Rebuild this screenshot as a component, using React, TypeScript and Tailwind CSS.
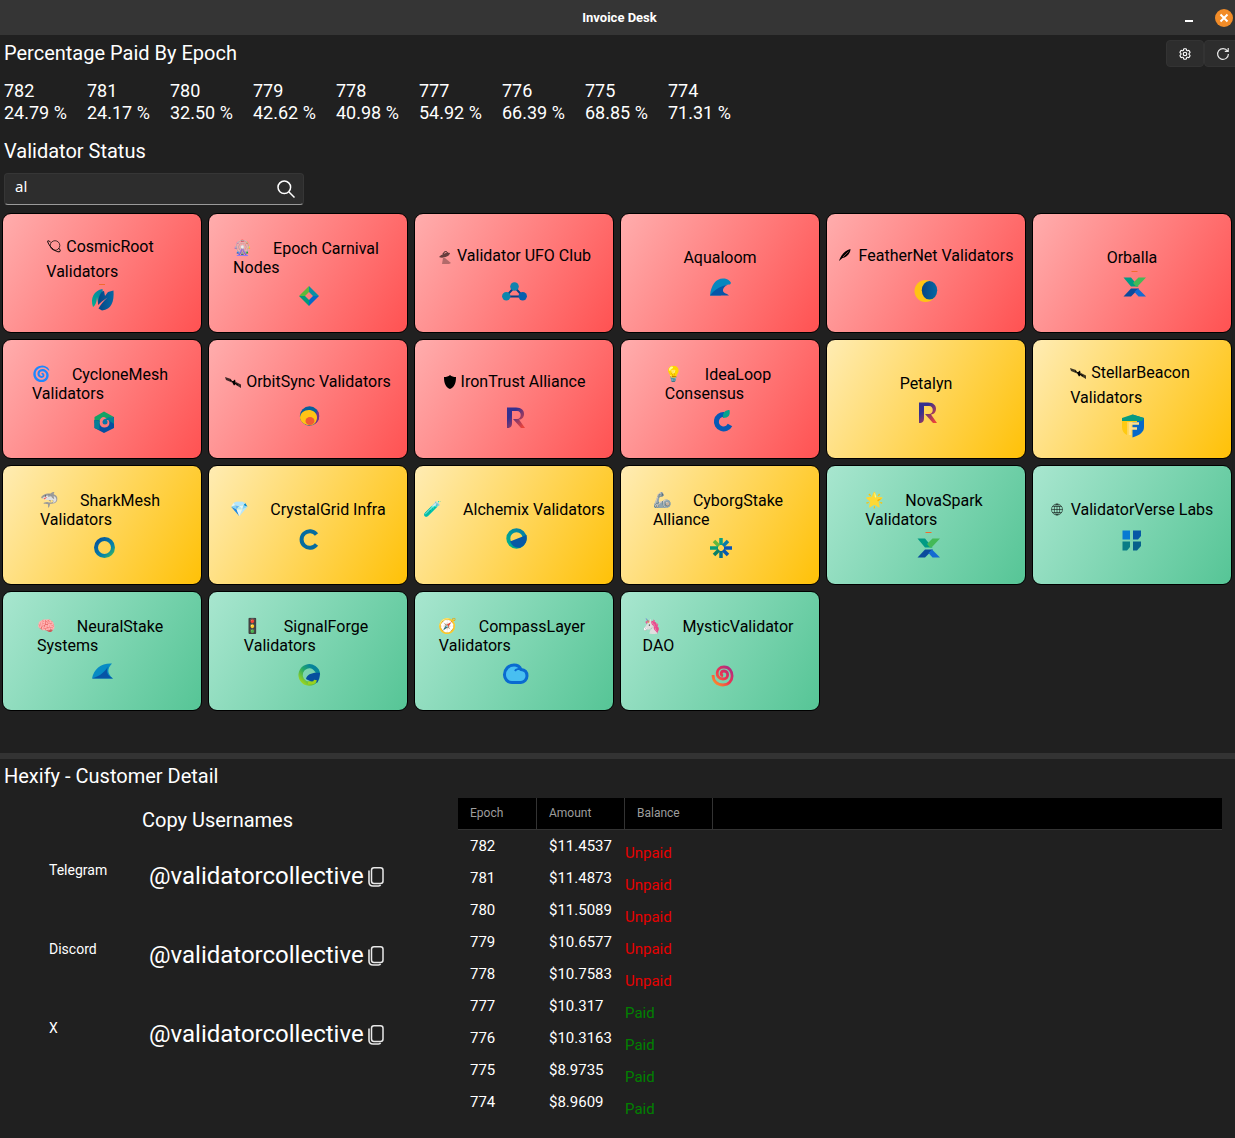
import React from "react";
import { HiOutlineCog6Tooth } from "react-icons/hi2";

type Tone = "red" | "yellow" | "green";
type Glyph = "planet" | "ufo" | "feather" | "satellite" | "shield";

interface Validator {
  lines: string[];
  emoji?: string;
  glyph?: Glyph;
  globe?: boolean;
  logo: string;
  tone: Tone;
}

const TONES: Record<Tone, string> = {
  red: "bg-[linear-gradient(121deg,#ffadad,#ff5252)]",
  yellow: "bg-[linear-gradient(121deg,#ffecb3,#ffc107)]",
  green: "bg-[linear-gradient(121deg,#a8e6cf,#56c596)]",
};

const EPOCHS = [
  ["782", "24.79 %"],
  ["781", "24.17 %"],
  ["780", "32.50 %"],
  ["779", "42.62 %"],
  ["778", "40.98 %"],
  ["777", "54.92 %"],
  ["776", "66.39 %"],
  ["775", "68.85 %"],
  ["774", "71.31 %"],
];

const VALIDATORS: Validator[] = [
  { lines: ["CosmicRoot", "Validators"], glyph: "planet", logo: "leaf", tone: "red" },
  { lines: ["Epoch Carnival", "Nodes"], emoji: "🎡", logo: "diamond", tone: "red" },
  { lines: ["Validator UFO Club"], glyph: "ufo", logo: "nodes", tone: "red" },
  { lines: ["Aqualoom"], logo: "wave", tone: "red" },
  { lines: ["FeatherNet Validators"], glyph: "feather", logo: "moon", tone: "red" },
  { lines: ["Orballa"], logo: "cross", tone: "red" },
  { lines: ["CycloneMesh", "Validators"], emoji: "🌀", logo: "hex", tone: "red" },
  { lines: ["OrbitSync Validators"], glyph: "satellite", logo: "arcs", tone: "red" },
  { lines: ["IronTrust Alliance"], glyph: "shield", logo: "ribbon", tone: "red" },
  { lines: ["IdeaLoop", "Consensus"], emoji: "💡", logo: "loop", tone: "red" },
  { lines: ["Petalyn"], logo: "ribbon", tone: "yellow" },
  { lines: ["StellarBeacon", "Validators"], glyph: "satellite", logo: "crest", tone: "yellow" },
  { lines: ["SharkMesh", "Validators"], emoji: "🦈", logo: "ring", tone: "yellow" },
  { lines: ["CrystalGrid Infra"], emoji: "💎", logo: "arc", tone: "yellow" },
  { lines: ["Alchemix Validators"], emoji: "🧪", logo: "disc", tone: "yellow" },
  { lines: ["CyborgStake", "Alliance"], emoji: "🦾", logo: "burst", tone: "yellow" },
  { lines: ["NovaSpark", "Validators"], emoji: "🌟", logo: "cross", tone: "green" },
  { lines: ["ValidatorVerse Labs"], globe: true, logo: "quad", tone: "green" },
  { lines: ["NeuralStake", "Systems"], emoji: "🧠", logo: "fin", tone: "green" },
  { lines: ["SignalForge", "Validators"], emoji: "🚦", logo: "swoosh", tone: "green" },
  { lines: ["CompassLayer", "Validators"], emoji: "🧭", logo: "cloud", tone: "green" },
  { lines: ["MysticValidator", "DAO"], emoji: "🦄", logo: "spiral", tone: "green" },
];

const ACCOUNTS = ["Telegram", "Discord", "X"];

const INVOICES = [
  ["782", "$11.4537", "Unpaid"],
  ["781", "$11.4873", "Unpaid"],
  ["780", "$11.5089", "Unpaid"],
  ["779", "$10.6577", "Unpaid"],
  ["778", "$10.7583", "Unpaid"],
  ["777", "$10.317", "Paid"],
  ["776", "$10.3163", "Paid"],
  ["775", "$8.9735", "Paid"],
  ["774", "$8.9609", "Paid"],
];

/* Logo artwork, drawn on a 32 x 32 field */
const LOGOS: Record<string, React.ReactNode> = {
  leaf: (
    <>
      <path d="M13 4.500h6" stroke="#f26a2e" strokeWidth="1" />
      <path d="M7 27C4 18 8 10.500 16.500 9c.6 5-.3 9-4.500 14l-1-6c-.3 4-1 8-4 10z" fill="url(#g-teal)" />
      <path d="M12 25c0-8 3-14 6-14l1 5 3-4 5.500-1.500c.8 11-2 19-11.500 20l-3.500-2c2-4 5-7 9-11-4 2.500-7 5-9.500 7.500z" fill="url(#g-navy)" />
    </>
  ),
  diamond: (
    <>
      <path d="M17 10 7 20h6l4-4z" fill="#5cb83c" />
      <path d="m7 20 10 10v-6l-4-4z" fill="#009a7b" />
      <path d="m17 10 10 10h-6l-4-4z" fill="#0b8fa3" />
      <path d="M17 30l10-10h-6l-4 4z" fill="#0668c8" />
    </>
  ),
  nodes: (
    <>
      <path d="M16.500 15 8 24.500h17z" fill="none" stroke="#063f86" strokeWidth="2" />
      <circle cx="16.500" cy="14.500" r="4.300" fill="#1183ae" />
      <circle cx="8.300" cy="24.300" r="4.200" fill="#0a86ad" />
      <circle cx="24.700" cy="24.300" r="4.200" fill="#075fae" />
    </>
  ),
  wave: (
    <>
      <path d="M6 28.500C7 18 12 11.500 19 11.500c4 0 7 2 8 4.500l-1 1.500c-7-1-10 7-9 11z" fill="#0687bf" />
      <path d="M6 28.500c4-5 8-8 13-9.500 2-.7 4-1 5-1.500-6 3-7 8-1 9.500l2 1.500z" fill="#0656a8" />
    </>
  ),
  moon: (
    <>
      <circle cx="15.500" cy="19" r="11" fill="#ffc414" />
      <ellipse cx="19.500" cy="18.300" rx="7.700" ry="9.300" fill="url(#g-navy)" />
    </>
  ),
  cross: (
    <>
      <path d="M15.500 4.500h6" stroke="#f26a2e" strokeWidth="1" />
      <path d="M7.500 10.500H15l7.500 9H15z" fill="#009b84" />
      <path d="M30 10.500h-7.500L17 16l3 3.500h1.500z" fill="#44b957" />
      <path d="M7.500 29.500H15l8-8h-8z" fill="#0b4a9c" />
      <path d="M30 29.500h-7.500l-4-4.500 3.500-3.500z" fill="#146bd2" />
    </>
  ),
  hex: (
    <>
      <path d="M18 9.500 8.500 15v6l5-1c0-3 2-5 4.500-5l4 2 6-2z" fill="#13a366" />
      <path d="M8.500 18v8l9.500 5 10-5V15l-6 2c3 4 1 9-4 8.500-3 0-5-3-4.500-7z" fill="#064fa0" />
      <path d="M8.500 18v8l5 2v-9zM17 18h5l6 4v-6l-5-1z" fill="#077f96" />
      <circle cx="19" cy="20" r="2.500" fill="#0875aa" />
    </>
  ),
  arcs: (
    <>
      <circle cx="17.500" cy="18" r="9.700" fill="#075f9b" />
      <path d="M25 12c4 5 2 12-3 14.500z" fill="#74308c" />
      <path d="M8 20c0-10 16-11 17-1 0 4-2 7-5 8-6 1-11-2-12-7z" fill="#ffc315" />
      <ellipse cx="18" cy="23" rx="4.500" ry="4" fill="#f05a35" />
    </>
  ),
  ribbon: (
    <path d="M9 30V9.500h9c11 0 9.500 12 3 12l6 8.500h-4l-8-9h4c5 0 5-8 0-8h-5v12c0 3-1 5-5 5z" fill="url(#g-ribbon)" />
  ),
  loop: (
    <>
      <path d="M20 12.500a7.200 7.200 0 1 0 6 10.500" fill="none" stroke="#0659b5" strokeWidth="5" />
      <path d="M19 14c0-4 3-6 6.500-6 1 5-1 8-6.500 8z" fill="#07a28d" />
    </>
  ),
  crest: (
    <>
      <path d="M16.500 8.500 28 12v9c0 5-4 8-11.500 10.500z" fill="#0668c8" />
      <path d="M6 12v9c0 4 2 6.500 5 8V16h10v-5z" fill="#ffca12" />
      <path d="M6 15v-3l10.500-3.500L28 12l-2 3z" fill="#079b80" />
      <path d="M14 29V17.500h9M14 22.500h7" fill="none" stroke="#ffe08a" strokeWidth="2.500" />
    </>
  ),
  ring: <circle cx="18.500" cy="19.500" r="8.500" fill="none" stroke="url(#g-ring)" strokeWidth="4" />,
  arc: <path d="M24.500 15.500a8.300 8.300 0 1 0 0 10" fill="none" stroke="#066c9f" strokeWidth="4" />,
  disc: (
    <>
      <circle cx="18.500" cy="19.500" r="8.200" fill="none" stroke="url(#g-teal)" strokeWidth="4" />
      <path d="M12 22.500 28.500 16c1 6-1 10-6 12.500-5 1-8-1-10.500-6z" fill="#0758a5" />
    </>
  ),
  burst: (
    <g strokeWidth="3.500">
      <path d="M17 10v7" stroke="#0aa184" />
      <path d="m10 13 5 5" stroke="#65b83c" />
      <path d="M6 20h8" stroke="#0a9c78" />
      <path d="m10 27 5-5" stroke="#087f66" />
      <path d="M17 30v-7" stroke="#066f8b" />
      <path d="m24 27-5-5" stroke="#0758af" />
      <path d="M28 20h-8" stroke="#0754b8" />
      <path d="m24 13-5 5" stroke="#087ba8" />
    </g>
  ),
  quad: (
    <>
      <path d="M6.500 11.500H14v9H6.500z" fill="#087ad2" />
      <path d="M17 11.500h8V17l-3 3.500h-5z" fill="#0758a5" />
      <path d="M6.500 22.500H14V28l-3 3.500H6.500z" fill="#087d86" />
      <path d="M17 22.500h8V27l-4 4.500h-4z" fill="#07618b" />
    </>
  ),
  fin: (
    <>
      <path d="M6 24.500C8 15 15 9 26 9.500c-5 5-5 10 1 15z" fill="#078bc4" />
      <path d="M6 24.500c8-2 14-8 16-12-2 5-1 9 5 12z" fill="#0754a6" />
    </>
  ),
  swoosh: (
    <>
      <path d="M24 26.500a8.700 8.700 0 1 1 2-6" fill="none" stroke="url(#g-lime)" strokeWidth="4.300" />
      <path d="M14 25c1-5 7-7 14-6 0 4-1 7-3 10l-2-2-3 1z" fill="#064f9e" />
      <path d="M16 29h4c2 0 3-1 3.500-3" fill="none" stroke="#9ad01f" strokeWidth="3" />
    </>
  ),
  cloud: (
    <>
      <path d="M14 28.500a7.500 7.500 0 0 1-7.500-8c0-5 4-9.500 9.500-9.500 4 0 6 2 7 4.500 4 .2 6 3 6 6.500s-3 6.500-6 6.500z" fill="#48bff1" stroke="#0a6bd0" strokeWidth="3" strokeLinejoin="round" />
      <path d="M17 17c1-2 4-2.500 6-1.500" fill="none" stroke="#0a6bd0" strokeWidth="2" />
    </>
  ),
  spiral: (
    <path d="M19 22c-3-1-2-5 1-5 5 0 5 8-1 8-8 0-8-12 1-12 11 0 11 18-1 18-6 0-10-4-10-10" fill="none" stroke="url(#g-spiral)" strokeWidth="2.800" />
  ),
};

function Logo({ name }: { name: string }) {
  return (
    <svg viewBox="0 0 32 32" className="size-8 shrink-0 overflow-visible" aria-hidden="true">
      {LOGOS[name]}
    </svg>
  );
}

function Gradients() {
  return (
    <svg className="absolute size-0" aria-hidden="true">
      <defs>
        <linearGradient id="g-teal" x1="0" y1="1" x2="1" y2="0">
          <stop offset="0" stopColor="#00b28c" />
          <stop offset="1" stopColor="#087ba8" />
        </linearGradient>
        <linearGradient id="g-navy" x1="0" y1="0" x2="1" y2="0">
          <stop offset="0" stopColor="#064585" />
          <stop offset="1" stopColor="#0668a5" />
        </linearGradient>
        <linearGradient id="g-ribbon" x1="0" y1="0" x2="1" y2="1">
          <stop offset="0.300" stopColor="#35308f" />
          <stop offset="0.900" stopColor="#e8433c" />
        </linearGradient>
        <linearGradient id="g-ring" x1="0" y1="0" x2="1" y2="1">
          <stop offset="0" stopColor="#06509c" />
          <stop offset="0.700" stopColor="#0787a8" />
          <stop offset="1" stopColor="#40b95b" />
        </linearGradient>
        <linearGradient id="g-lime" x1="1" y1="0" x2="0" y2="1">
          <stop offset="0.200" stopColor="#06839a" />
          <stop offset="0.500" stopColor="#20a869" />
          <stop offset="1" stopColor="#b0dc12" />
        </linearGradient>
        <linearGradient id="g-spiral" x1="1" y1="0" x2="0" y2="1">
          <stop offset="0" stopColor="#a42a8c" />
          <stop offset="0.500" stopColor="#ee3450" />
          <stop offset="1" stopColor="#ff9a26" />
        </linearGradient>
      </defs>
    </svg>
  );
}

/* One-colour pictograms that lead some of the names */
function Pictogram({ name }: { name: Glyph }) {
  switch (name) {
    case "planet":
      return (
        <svg viewBox="0 0 16 16" className="inline size-4 align-[-2px]" fill="none" stroke="#000" aria-hidden="true">
          <circle cx="9" cy="7.500" r="4.800" strokeWidth=".7" />
          <path d="M4.500 4C1 1.500 1 3 3 6.500c3 5 9 8.500 11 7 .8-1-.5-2.500-1.500-3.500" strokeWidth="1" />
        </svg>
      );
    case "ufo":
      return (
        <svg viewBox="0 0 16 16" className="inline size-4 align-[-5px]" aria-hidden="true">
          <path d="m6 8-1 6h7l2-1-6-5z" fill="#000" opacity=".3" />
          <path d="M2 7c3-3 7-5 11-4 0 3-7 6-11 4z" fill="#000" opacity=".6" />
          <path d="M6 4c1-3 4-3 4.500-1" fill="none" stroke="#000" strokeWidth=".8" />
        </svg>
      );
    case "feather":
      return (
        <svg viewBox="0 0 16 16" className="inline size-4 align-[-2px]" aria-hidden="true">
          <path d="M0 14C2 8 6 3 11.500 2c0 4-3 8-8 9z" fill="#000" />
          <path d="M4 10 9.500 4.500" stroke="#ff9191" strokeWidth=".5" />
        </svg>
      );
    case "satellite":
      return (
        <svg viewBox="0 0 17 16" className="inline h-4 w-[17px] align-[-3px]" aria-hidden="true">
          <path d="m0 3 6 2 1 3.500L1 6zM11 8l5 2.500v3.500l-5-3z" fill="#000" opacity=".75" />
          <path d="m5 6 8 5" stroke="#000" strokeWidth="1" />
          <path d="m7 8 3-2.500L11 10l-2 1.500z" fill="#000" />
        </svg>
      );
    case "shield":
      return (
        <svg viewBox="0 0 14 16" className="inline h-4 w-[14px] align-[-3px]" aria-hidden="true">
          <path d="M1 3c2.500 0 4.500-.5 6-2 1.500 1.500 3.500 2 6 2 0 6-1.500 10-6 12C2.500 13 1 9 1 3z" fill="#000" />
        </svg>
      );
  }
}

function Globe() {
  return (
    <svg viewBox="0 0 16 16" className="inline size-4 align-[-3px]" fill="none" stroke="#000" strokeOpacity=".75" strokeWidth=".7" aria-hidden="true">
      <circle cx="6" cy="7.500" r="5.500" />
      <ellipse cx="6" cy="7.500" rx="2.700" ry="5.500" />
      <path d="M.5 7.500h11M6 2v11M1.500 4.500h9M1.500 10.500h9" />
    </svg>
  );
}

function titleClass(v: Validator) {
  const single = v.lines.length === 1;
  if (v.glyph) return single ? "pb-1 leading-[25px]" : "-mb-1 leading-[25px]";
  return single ? "leading-[19px]" : "-mb-px pt-px leading-[19px]";
}

function ValidatorCard({ v }: { v: Validator }) {
  const [first, ...rest] = v.lines;
  const hasMark = v.emoji || v.glyph || v.globe;
  return (
    <button
      type="button"
      className={`flex h-[120px] flex-col items-center justify-center rounded-[9px] border border-black text-base text-black ${TONES[v.tone]}`}
    >
      <span className={`text-left whitespace-pre ${titleClass(v)}`}>
        <span className="block">
          {v.emoji && (
            <span className="inline-block h-[19px] w-9 align-top font-['Noto_Color_Emoji'] text-[15px] leading-[19px]">
              {v.emoji}
            </span>
          )}
          {v.glyph && <Pictogram name={v.glyph} />}
          {v.globe && <Globe />}
          <span>{(hasMark ? " " : "") + first + (rest.length ? " " : "")}</span>
        </span>
        {rest.map((line) => (
          <span key={line} className="block">
            {line}
          </span>
        ))}
      </span>
      <Logo name={v.logo} />
    </button>
  );
}

function CopyIcon() {
  return (
    <svg viewBox="0 0 16 20" className="mt-0.5 h-5 w-4" fill="none" stroke="#e8e8e8" aria-hidden="true">
      <rect x="3.500" y=".8" width="11.500" height="15.700" rx="2.500" strokeWidth="1.500" />
      <path d="M1 3.500V15c0 2.500 1.500 4 4 4h5.500c1 0 1.800-.5 2-1.200" strokeWidth="1.600" />
    </svg>
  );
}

export default function App() {
  return (
    <div className="flex min-h-screen flex-col overflow-hidden bg-[#202020] font-[Roboto,sans-serif] text-white">
      <Gradients />
      <header className="flex h-[35px] items-center bg-[#353535] pl-1.5">
        <div className="flex-1" />
        <h1 className="text-[13px] font-bold">Invoice Desk</h1>
        <div className="flex flex-1 items-center justify-end gap-4 pr-0.5">
          <button type="button" aria-label="Minimize" className="flex size-5 items-center justify-center pt-1.5">
            <span className="h-0.5 w-2 bg-white" />
          </button>
          <button type="button" aria-label="Close" className="flex size-[18px] items-center justify-center rounded-full bg-[#f28c28]">
            <svg viewBox="0 0 10 10" className="size-2.5" stroke="#fff" strokeWidth="2" aria-hidden="true">
              <path d="m1.500 1.500 7 7m0-7-7 7" />
            </svg>
          </button>
        </div>
      </header>

      <main className="px-1 pt-[5px]">
        <div className="flex items-start justify-between">
          <h2 className="pt-px text-xl leading-6">Percentage Paid By Epoch</h2>
          <div className="-mr-3 flex">
            <button type="button" aria-label="Settings" className="flex h-[27px] w-[38px] items-center justify-center rounded border border-[#333] bg-[#2d2d2d]">
              <HiOutlineCog6Tooth className="size-3.5" strokeWidth={2} />
            </button>
            <button type="button" aria-label="Refresh" className="flex h-[27px] w-[39px] items-center justify-center rounded border border-[#333] bg-[#2d2d2d] pr-0.5">
              <svg viewBox="0 0 14 14" className="size-3.5" fill="none" stroke="#e8e8e8" strokeWidth="1.200" aria-hidden="true">
                <path d="M11.500 4A5.400 5.400 0 1 0 12.400 7M12.200 1v3.300H8.800" />
              </svg>
            </button>
          </div>
        </div>

        <dl className="mt-[13px] flex text-lg leading-[22px]">
          {EPOCHS.map(([epoch, paid]) => (
            <div key={epoch} className="w-[83px] whitespace-nowrap">
              <dt>{epoch}</dt>
              <dd>{paid}</dd>
            </div>
          ))}
        </dl>

        <h2 className="mt-[15px] text-xl leading-6">Validator Status</h2>
        <label className="mt-2.5 flex h-8 w-[300px] items-center rounded border border-[#363636] border-b-[#9a9a9a] bg-[#2d2d2d] pr-2 pl-2.5">
          <input
            type="text"
            aria-label="Search validators"
            defaultValue="al"
            className="min-w-0 flex-1 bg-transparent pb-1.5 font-['Noto_Sans',sans-serif] text-[15px] leading-5 outline-none"
          />
          <svg viewBox="0 0 18 18" className="size-[18px]" fill="none" stroke="#fff" strokeWidth="1.500" aria-hidden="true">
            <circle cx="7.300" cy="7.300" r="6.300" />
            <path d="m12 12 5.500 5.500" />
          </svg>
        </label>
      </main>

      <section aria-label="Validators" className="mt-2 grid grid-cols-[repeat(auto-fill,200px)] gap-1.5 pl-0.5">
        {VALIDATORS.map((v) => (
          <ValidatorCard key={v.lines.join(" ")} v={v} />
        ))}
      </section>

      <div role="separator" className="mt-[42px] h-1.5 bg-[#333]" />

      <section className="flex-1 pt-[5px] pb-3">
        <h2 className="pl-1 text-xl leading-6">Hexify - Customer Detail</h2>
        <div className="mt-2.5 flex pr-[13px]">
          <div className="w-[458px] shrink-0 pt-2.5">
            <h3 className="pl-[142px] text-xl leading-6">Copy Usernames</h3>
            <div className="mt-7">
              {ACCOUNTS.map((account) => (
                <div key={account} className="flex h-[79px] pl-[49px]">
                  <span className="w-[100px] text-sm">{account}</span>
                  <button type="button" aria-label={`Copy ${account} username`} className="flex h-8 items-center gap-1 text-2xl">
                    <span>@validatorcollective</span>
                    <CopyIcon />
                  </button>
                </div>
              ))}
            </div>
          </div>

          <table className="w-full table-fixed border-separate border-spacing-0 self-start text-left">
            <thead className="bg-black text-xs text-[#9d9d9d]">
              <tr className="h-8">
                <th className="w-[79px] border-r border-b border-[#333] pb-px pl-3 font-normal">Epoch</th>
                <th className="w-[88px] border-r border-b border-[#333] pb-px pl-3 font-normal">Amount</th>
                <th className="w-[88px] border-r border-b border-[#333] pb-px pl-3 font-normal">Balance</th>
                <td className="border-b border-[#333]" />
              </tr>
            </thead>
            <tbody className="text-[15px] leading-[18px]">
              {INVOICES.map(([epoch, amount, balance]) => (
                <tr key={epoch} className="h-8 align-top">
                  <td className="pt-[7px] pl-3">{epoch}</td>
                  <td className="pt-[7px] pl-3">{amount}</td>
                  <td className={balance === "Paid" ? "pt-3.5 text-[#008000]" : "pt-3.5 text-[#e60000]"}>{balance}</td>
                  <td />
                </tr>
              ))}
            </tbody>
          </table>
        </div>
      </section>
    </div>
  );
}
